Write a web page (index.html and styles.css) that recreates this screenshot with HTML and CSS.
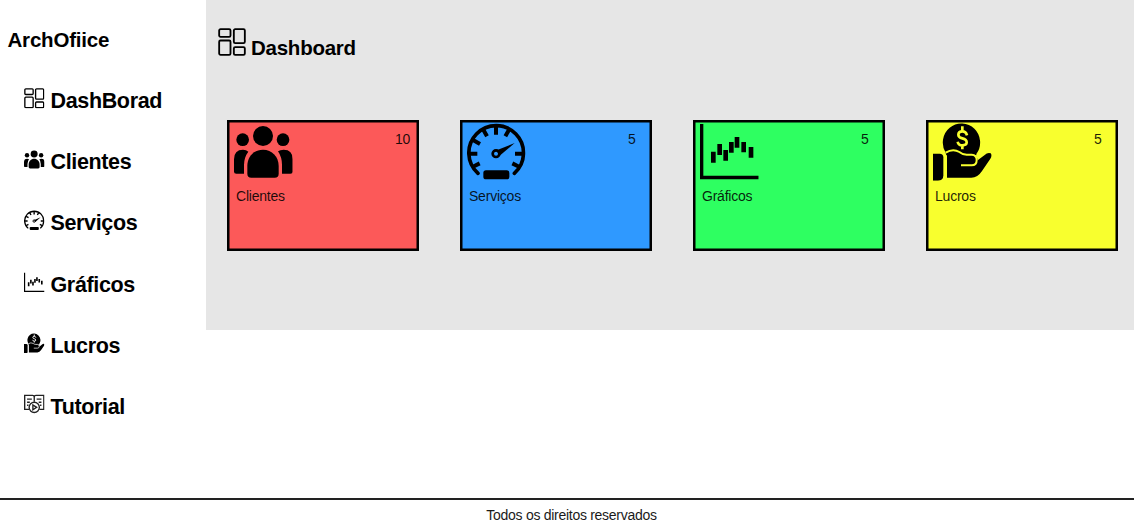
FILE: index.html
```html
<!DOCTYPE html>
<html lang="pt-BR">
<head>
<meta charset="utf-8">
<title>ArchOfiice</title>
<link rel="stylesheet" href="styles.css">
</head>
<body>
<svg class="sprite" aria-hidden="true">
  <symbol id="dash" viewBox="0 0 84 84">
    <g fill="none" stroke="#000" stroke-width="5.5">
      <rect x="3.5" y="3.5" width="34" height="23" rx="4"/>
      <rect x="47.5" y="3.5" width="33" height="42" rx="4"/>
      <rect x="3.5" y="37.5" width="34" height="43" rx="4"/>
      <rect x="47.5" y="57.5" width="33" height="23" rx="4"/>
    </g>
  </symbol>
  <symbol id="people" viewBox="0 0 176 176">
    <circle cx="87" cy="42" r="30"/>
    <circle cx="26" cy="53" r="19"/>
    <circle cx="147" cy="53" r="19"/>
    <path d="M40 155V132C40 104 60 83 87 83S134 104 134 132V155Q134 167 122 167H52Q40 167 40 155Z"/>
    <path d="M0 149V112Q0 83 27 83Q37 83 43 89Q30 106 30 129V155H7Q0 155 0 149Z"/>
    <path d="M176 149V112Q176 83 149 83Q138 83 132 88Q144 106 144 129V155H169Q176 155 176 149Z"/>
  </symbol>
  <symbol id="gauge" viewBox="0 0 176 176">
    <g fill="none" stroke="#000">
      <path stroke-width="11" stroke-linecap="round" d="M33 154A82 82 0 1 1 142 154"/>
      <path stroke-width="12" d="M87 10V38M49 23L60 43M126 23L115 43M18 54L39 66M5 95H31M144 95H170M18 134L38 124M156 134L136 124"/>
      <circle cx="87" cy="95" r="10" stroke-width="8"/>
    </g>
    <path d="M89 85L143 63L97 102Z"/>
    <rect x="49" y="145" width="78" height="27" rx="8"/>
  </symbol>
  <symbol id="chart" viewBox="0 0 176 176">
    <path d="M0 6H10V161H176V172H0Z"/>
    <path d="M33 89H47V122H33ZM52 66H66V99H52ZM70 84H84V116H70ZM87 60H101V92H87ZM104 45H118V77H104ZM124 60H138V91H124ZM146 75H160V107H146Z"/>
  </symbol>
  <symbol id="money" viewBox="0 0 176 176">
    <path d="M38 92A56 57 0 1 1 130 96V100H40Z"/>
    <path class="coin-sign" d="M102 40Q99 28 88 28Q76 28 76 38Q76 46 88 49Q101 52 101 61Q101 70 88 70Q76 70 74 59M88 13V28M88 70V82"/>
    <path d="M0 95H20Q31 95 31 106V160Q31 176 15 176H0Z"/>
    <path d="M42 94Q62 80 79 91Q87 98 101 98H118Q133 100 134 115L155 99Q163 91 173 94Q179 100 172 110L147 147Q134 167 115 167H42Z"/>
    <path class="hand-line" d="M38 92Q60 78 79 90Q87 97 101 98H116Q131 99 131 114Q131 130 116 130H84"/>
  </symbol>
  <symbol id="tutorial" viewBox="0 0 60 60">
    <g fill="none" stroke="#222" stroke-width="4">
      <path d="M15 45H2V4H25Q30 4 30 9Q30 4 35 4H58V45H45M30 9V23M9 15H23M37 15H51M9 24H17M43 24H51M9 33H13M47 33H51"/>
      <circle cx="30" cy="39" r="15" fill="#fff"/>
      <path d="M26 32V46L37 39Z"/>
    </g>
  </symbol>
</svg>
<div class="layout">
  <aside class="sidebar">
    <h1 class="brand">ArchOfiice</h1>
    <nav class="menu">
      <a class="item"><svg class="icon"><use href="#dash"/></svg>DashBorad</a>
      <a class="item"><svg class="icon"><use href="#people"/></svg>Clientes</a>
      <a class="item"><svg class="icon"><use href="#gauge"/></svg>Serviços</a>
      <a class="item"><svg class="icon"><use href="#chart"/></svg>Gráficos</a>
      <a class="item"><svg class="icon"><use href="#money"/></svg>Lucros</a>
      <a class="item"><svg class="icon"><use href="#tutorial"/></svg>Tutorial</a>
    </nav>
  </aside>
  <main class="content">
    <h2 class="title"><svg class="title-icon"><use href="#dash"/></svg>Dashboard</h2>
    <section class="cards">
      <article class="card red"><svg class="card-icon"><use href="#people"/></svg><span class="count">10</span><span class="label">Clientes</span></article>
      <article class="card blue"><svg class="card-icon"><use href="#gauge"/></svg><span class="count">5</span><span class="label">Serviços</span></article>
      <article class="card green"><svg class="card-icon"><use href="#chart"/></svg><span class="count">5</span><span class="label">Gráficos</span></article>
      <article class="card yellow"><svg class="card-icon"><use href="#money"/></svg><span class="count">5</span><span class="label">Lucros</span></article>
    </section>
  </main>
</div>
<footer class="footer">Todos os direitos reservados</footer>
</body>
</html>
```
FILE: styles.css
```css
* { box-sizing: border-box; }
body {
  margin: 0;
  height: 528px;
  display: flex;
  flex-direction: column;
  overflow: hidden;
  background: #fff;
  color: #000;
  font-family: "Liberation Sans", Arial, sans-serif;
}
.sprite { display: none; }
.layout { flex: 1; display: flex; align-items: flex-start; }
.sidebar { width: 206px; padding-top: 28px; }
.brand {
  margin: 0 0 0 7.5px;
  font-size: 20.5px;
  letter-spacing: -.2px;
  line-height: 24px;
}
.menu { display: flex; flex-direction: column; padding: 19px 0 0 24px; }
.item {
  display: flex;
  align-items: center;
  gap: 6px;
  height: 61.2px;
  font-size: 21.5px;
  letter-spacing: -.35px;
  font-weight: bold;
}
.icon { width: 20.5px; height: 20.5px; margin-bottom: 6.5px; --paper: #fff; }
.content { flex: 1; height: 330px; background: #e6e6e6; padding: 28px 16px 0 21px; }
.title {
  display: flex;
  align-items: center;
  gap: 5px;
  margin: 0 0 0 -9px;
  height: 28px;
  font-size: 20.5px;
  letter-spacing: -.25px;
  line-height: 24px;
  padding-top: 12px;
}
.title-icon { width: 28px; height: 28px; margin-top: -12px; }
.cards { display: flex; justify-content: space-between; margin-top: 64px; }
.card {
  width: 192px;
  height: 130.5px;
  border: 2px solid #000;
  box-shadow: inset 0 0 0 .5px #000;
  display: grid;
  grid-template-columns: 161px 1fr;
  grid-template-rows: 59px 30px;
  padding-left: 5px;
  font-size: 14px;
  letter-spacing: -.22px;
}
.card-icon { width: 58.7px; height: 58.7px; }
.count { padding: 9px 0 0; line-height: 16px; }
.label { padding: 7px 0 0 2px; line-height: 16px; }
.red { background: #fc5959; }
.blue { background: #2f99ff; }
.green { background: #2eff61; }
.yellow { background: #f8ff2e; --paper: #f8ff2e; }
.count, .label { color: rgba(0, 0, 0, .88); }
.coin-sign { fill: none; stroke: var(--paper); stroke-width: 8; }
.hand-line { fill: none; stroke: var(--paper); stroke-width: 6; }
.footer {
  height: 30px;
  border-top: 2px solid #222;
  padding: 7px 0 0 9px;
  text-align: center;
  font-size: 14px;
  letter-spacing: -.28px;
  line-height: 16px;
  color: #1a1a1a;
}
```
